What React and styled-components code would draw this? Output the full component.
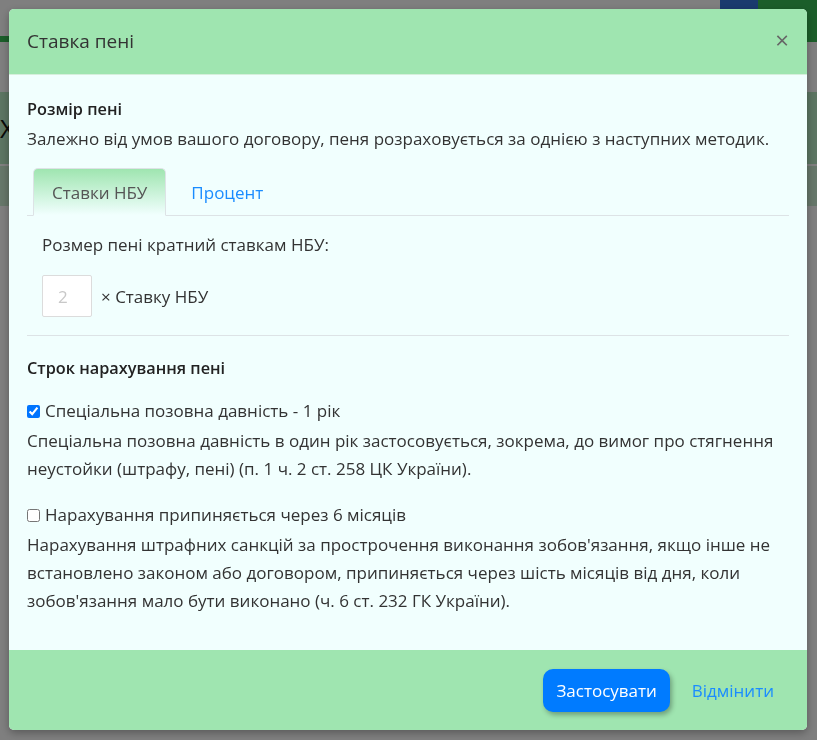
import React from "react";
import styled, { createGlobalStyle } from "styled-components";

const GlobalStyle = createGlobalStyle`
  html, body {
    margin: 0;
    padding: 0;
    height: 100%;
    overflow: hidden;
    font-family: "Open Sans", "Liberation Sans", sans-serif;
    color: #333;
  }
  * { box-sizing: border-box; }
`;

/* page behind the dialog */
const Page = styled.div`
  width: 817px;
  height: 740px;
  background: #fff;
  display: flex;
  flex-direction: column;
`;

const TopBar = styled.div`
  height: 36px;
  display: flex;
  justify-content: flex-end;
`;

const NavButton = styled.div`
  width: ${(p) => p.w}px;
  background: ${(p) => p.bg};
`;

const GreenLine = styled.div`
  height: 6px;
  background: #37bd55;
`;

const PageTitle = styled.div`
  margin-top: 50px;
  height: 72px;
  background: #b8eac4;
  font-size: 26px;
  line-height: 72px;
  padding-left: 0;
  color: #111;
`;

const PageBand = styled.div`
  margin-top: 2px;
  height: 40px;
  background: #cdeed4;
`;

const PageBody = styled.div`
  flex: 1;
  display: flex;
  justify-content: space-between;
  padding-top: 60px;
  color: #222;
  font-size: 16px;
  line-height: 28px;
`;

const PageCol = styled.div`
  width: 40px;
  overflow: hidden;
  white-space: nowrap;
  direction: ${(p) => (p.right ? "ltr" : "rtl")};
`;

const Overlay = styled.div`
  position: fixed;
  inset: 0;
  background: rgba(0, 0, 0, 0.5);
`;

/* dialog */
const Modal = styled.div`
  position: fixed;
  left: 9px;
  top: 9px;
  width: 798px;
  border-radius: 5px;
  overflow: hidden;
  background: #f1fffe;
  box-shadow: 0 3px 8px rgba(0, 0, 0, 0.3);
`;

const Header = styled.div`
  height: 66px;
  background: #9fe5b0;
  display: flex;
  align-items: center;
  justify-content: space-between;
  padding: 0 18px;
  border-bottom: 1px solid #d6efdc;
`;

const Title = styled.h5`
  margin: 0 0 2px;
  font-size: 19px;
  font-weight: 400;
  color: #333;
`;

const Close = styled.span`
  font-size: 24px;
  color: #666;
  line-height: 1;
  margin-top: -4px;
`;

const Body = styled.div`
  padding: 22px 18px 35px;
`;

const SectionTitle = styled.div`
  font-size: 16.3px;
  font-weight: 600;
  line-height: 24px;
  color: #222;
  margin-top: ${(p) => p.mt || 0}px;
`;

const Text = styled.div`
  font-size: 17px;
  line-height: ${(p) => p.lh || 24}px;
  margin-top: ${(p) => p.mt || 0}px;
`;

const Tabs = styled.div`
  margin-top: 17px;
  display: flex;
  border-bottom: 1px solid #dde3e6;
  padding-left: 6px;
`;

const Tab = styled.div`
  height: 48px;
  margin-bottom: -1px;
  padding: 0 18px;
  display: flex;
  align-items: center;
  font-size: 17px;
  border: 1px solid ${(p) => (p.active ? "#dde3e6" : "transparent")};
  border-bottom-color: ${(p) => (p.active ? "#f1fffe" : "transparent")};
  border-radius: 5px 5px 0 0;
  color: ${(p) => (p.active ? "#555" : "#1a8cff")};
  background: ${(p) =>
    p.active ? "linear-gradient(to bottom, #9fe5b0, #f1fffe)" : "none"};
  margin-left: ${(p) => (p.active ? 0 : 6)}px;
`;

const TabPane = styled.div`
  padding: 17px 15px 18px;
  border-bottom: 1px solid #dde3e6;
`;

const FieldRow = styled.div`
  display: flex;
  align-items: center;
  margin-top: 18px;
  gap: 9px;
  font-size: 17px;
`;

const NumberInput = styled.input`
  width: 50px;
  height: 42px;
  border: 1px solid #dcdcdc;
  border-radius: 2px;
  background: #fff;
  padding: 0 0 0 15px;
  font-size: 17px;
  font-family: inherit;
  color: #333;
  &::placeholder { color: #c8c8c8; }
`;

const Option = styled.div`
  margin-top: ${(p) => p.mt}px;
`;

const CheckLabel = styled.label`
  display: flex;
  align-items: center;
  gap: 5px;
  font-size: 17px;
  line-height: 28px;
  margin-bottom: 2px;
  input {
    margin: 0;
    width: 13px;
    height: 13px;
  }
`;

const Footer = styled.div`
  height: 80px;
  background: #9fe5b0;
  display: flex;
  align-items: center;
  justify-content: flex-end;
  padding: 0 21px 0 0;
`;

const PrimaryButton = styled.button`
  height: 43px;
  padding: 0 13px;
  border: none;
  border-radius: 10px;
  background: #007bff;
  color: #fff;
  font-family: inherit;
  font-size: 17px;
  box-shadow: 2px 3px 5px rgba(0, 0, 0, 0.3);
  margin-top: 1px;
`;

const LinkButton = styled.button`
  border: none;
  background: none;
  color: #1a8cff;
  font-family: inherit;
  font-size: 17px;
  padding: 0 12px;
  margin-left: 10px;
`;

const App = () => {
  return (
    <>
      <GlobalStyle />
      <Page>
        <TopBar>
          <NavButton w={38} bg="#3474dc" />
          <NavButton w={59} bg="#37bd55" />
        </TopBar>
        <GreenLine />
        <PageTitle>Х</PageTitle>
        <PageBand />
        <PageBody>
          <PageCol>пе<br />п</PageCol>
          <PageCol right>
            с<br />об<br />о<br />щ<br />у<br />о<br />р<br /><br />я<br />ст<br />а<br /><br />у<br />в<br />я<br />ня
          </PageCol>
        </PageBody>
      </Page>
      <Overlay />
      <Modal>
        <Header>
          <Title>Ставка пені</Title>
          <Close>×</Close>
        </Header>
        <Body>
          <SectionTitle>Розмір пені</SectionTitle>
          <Text mt={6}>
            Залежно від умов вашого договору, пеня розраховується за однією з
            наступних методик.
          </Text>
          <Tabs>
            <Tab active>Ставки НБУ</Tab>
            <Tab>Процент</Tab>
          </Tabs>
          <TabPane>
            <Text>Розмер пені кратний ставкам НБУ:</Text>
            <FieldRow>
              <NumberInput placeholder="2" />
              <span>× Ставку НБУ</span>
            </FieldRow>
          </TabPane>
          <SectionTitle mt={20}>Строк нарахування пені</SectionTitle>
          <Option mt={17}>
            <CheckLabel>
              <input type="checkbox" defaultChecked />
              Спеціальна позовна давність - 1 рік
            </CheckLabel>
            <Text lh={28}>
              Спеціальна позовна давність в один рік застосовується, зокрема,
              до вимог про стягнення неустойки (штрафу, пені) (п. 1 ч. 2 ст.
              258 ЦК України).
            </Text>
          </Option>
          <Option mt={18}>
            <CheckLabel>
              <input type="checkbox" />
              Нарахування припиняється через 6 місяців
            </CheckLabel>
            <Text lh={28}>
              Нарахування штрафних санкцій за прострочення виконання
              зобов'язання, якщо інше не встановлено законом або договором,
              припиняється через шість місяців від дня, коли зобов'язання мало
              бути виконано (ч. 6 ст. 232 ГК України).
            </Text>
          </Option>
        </Body>
        <Footer>
          <PrimaryButton>Застосувати</PrimaryButton>
          <LinkButton>Відмінити</LinkButton>
        </Footer>
      </Modal>
    </>
  );
};

export default App;
